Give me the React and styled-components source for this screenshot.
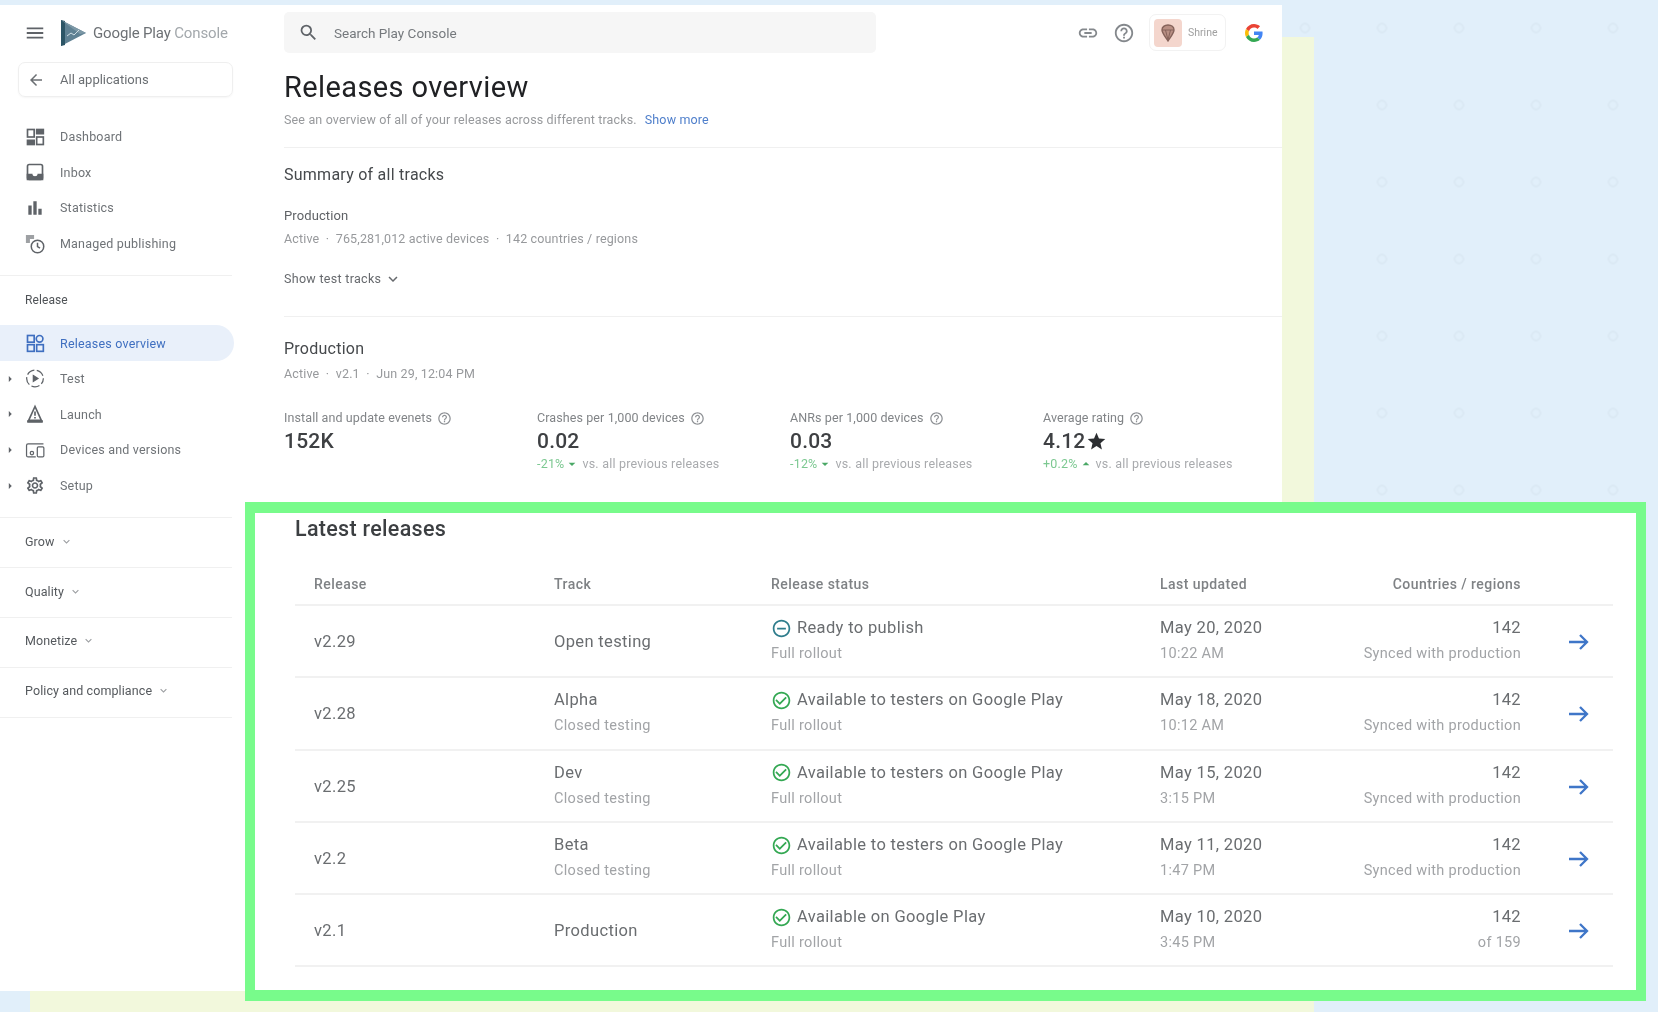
import styled, { createGlobalStyle } from "styled-components";
import {
  MdMenu,
  MdArrowBack,
  MdSearch,
  MdHelpOutline,
  MdLink,
  MdExpandMore,
  MdCheckCircleOutline,
  MdRemoveCircleOutline,
  MdStar,
  MdOutlineSettings,
  MdArrowRight,
  MdArrowDropDown,
  MdArrowDropUp,
  MdBarChart,
} from "react-icons/md";

const GlobalStyle = createGlobalStyle`
  html, body {
    margin: 0;
    padding: 0;
    overflow: hidden;
    background: #e1effa;
    font-family: Roboto, "Liberation Sans", sans-serif;
  }
`;

const Stage = styled.div`
  width: 1658px;
  height: 1012px;
  overflow: hidden;
  padding-top: 5px;
  box-sizing: border-box;
  filter: blur(0.6px);
  background-color: #e1effa;
  background-image: linear-gradient(#f2f8dc, #f2f8dc),
    radial-gradient(circle, transparent 3px, #dbe9f4 3.5px, #dbe9f4 5px, transparent 5.5px);
  background-size: 1284px 975px, 77px 77px;
  background-position: 30px 37px, 1266.5px -10.5px;
  background-repeat: no-repeat, repeat;
`;

const Panel = styled.div`
  width: 1282px;
  height: 986px;
  background: #fff;
  display: flex;
`;

const Sidebar = styled.aside`
  width: 245px;
  flex: none;
  padding-top: 8px;
  box-sizing: border-box;
`;

const Brand = styled.div`
  height: 40px;
  display: flex;
  align-items: center;
  gap: 15px;
  padding-left: 24px;
  color: #5f6368;
`;

const BrandMark = styled.span`
  display: flex;
  align-items: center;
  gap: 7px;
`;

const BrandName = styled.span`
  font-size: 15px;
  letter-spacing: -0.15px;
  color: #6d7175;
  white-space: nowrap;

  em {
    font-style: normal;
    color: #a3a8ac;
  }
`;

const BackBox = styled.div`
  width: 215px;
  height: 35px;
  margin: 9px 0 0 18px;
  box-sizing: border-box;
  border: 1px solid #efefef;
  border-radius: 7px;
  box-shadow: 0 1px 2px rgba(0, 0, 0, 0.04);
  display: flex;
  align-items: center;
  padding-left: 8px;
  gap: 15px;
  font-size: 13px;
  color: #6b6f73;
`;

const NavList = styled.nav`
  margin-top: ${(p) => p.$top || 0}px;
  display: flex;
  flex-direction: column;
`;

const NavRow = styled.div`
  width: 234px;
  height: 35.6px;
  flex: none;
  display: flex;
  align-items: center;
  font-size: 12.5px;
  letter-spacing: 0.2px;
  color: ${(p) => (p.$active ? "#3f6fc0" : "#6f7377")};
  background: ${(p) => (p.$active ? "#e9f0fa" : "transparent")};
  border-radius: 0 18px 18px 0;
`;

const CaretSlot = styled.span`
  width: 25px;
  flex: none;
  display: flex;
  padding-left: 3px;
  box-sizing: border-box;
  color: #5f6368;
`;

const IconSlot = styled.span`
  width: 20px;
  height: 20px;
  flex: none;
  margin-right: 15px;
  display: flex;
  align-items: center;
  justify-content: center;
  color: ${(p) => (p.$active ? "#3f6fc0" : "#5f6368")};
`;

const SideDivider = styled.div`
  width: 232px;
  height: 1px;
  background: #f0f0f0;
  margin-top: ${(p) => p.$top || 0}px;
`;

const SectionLabel = styled.div`
  margin: 15px 0 16px 25px;
  font-size: 12px;
  line-height: 18px;
  letter-spacing: 0.1px;
  color: #4f5357;
`;

const Collapsible = styled.div`
  width: 232px;
  height: 49.8px;
  box-sizing: border-box;
  border-bottom: 1px solid #f0f0f0;
  padding: 0 0 3px 25px;
  display: flex;
  align-items: center;
  gap: 5px;
  font-size: 12.5px;
  letter-spacing: 0.1px;
  color: #55595d;
`;

const Main = styled.main`
  flex: 1;
  min-width: 0;
`;

const Upper = styled.section`
  height: 497px;
  padding-left: 39px;
  box-sizing: border-box;
`;

const TopBar = styled.header`
  padding-top: 7px;
  display: flex;
  align-items: center;
`;

const SearchBox = styled.div`
  width: 592px;
  height: 41px;
  background: #f6f6f6;
  border-radius: 5px;
  display: flex;
  align-items: center;
  gap: 15px;
  padding-left: 14px;
  box-sizing: border-box;
  font-size: 13.5px;
  color: #75797d;
`;

const TopActions = styled.div`
  margin-left: auto;
  padding-right: 19px;
  display: flex;
  align-items: center;
  color: #84888c;
`;

const TopIcon = styled.span`
  width: 36px;
  display: flex;
  justify-content: center;
`;

const ShrineChip = styled.div`
  width: 77px;
  height: 37px;
  margin-left: 7px;
  margin-right: 19px;
  box-sizing: border-box;
  border: 1px solid #f2f2f2;
  border-radius: 7px;
  padding-left: 4px;
  display: flex;
  align-items: center;
  gap: 6px;
  font-size: 10.5px;
  color: #a0a0a0;
`;

const ShrineTile = styled.span`
  width: 28px;
  height: 28px;
  background: #f4d6cd;
  border-radius: 4px;
  display: flex;
  align-items: center;
  justify-content: center;
`;

const Title = styled.h1`
  margin: 16px 0 0;
  font-size: 29px;
  line-height: 36px;
  font-weight: 400;
  letter-spacing: 0.4px;
  color: #202124;
`;

const Muted = styled.p`
  margin: ${(p) => p.$top || 0}px 0 0;
  font-size: 12.5px;
  line-height: 18px;
  letter-spacing: 0.15px;
  color: #97999c;
  white-space: pre;
`;

const LinkText = styled.span`
  color: #4f7fcb;
  margin-left: 8px;
`;

const Rule = styled.hr`
  border: 0;
  height: 1px;
  background: #f0f0f0;
  margin: ${(p) => p.$top}px 0 0;
`;

const Heading = styled.h2`
  margin: ${(p) => p.$top}px 0 0;
  font-size: 16px;
  line-height: 22px;
  font-weight: 400;
  letter-spacing: 0.25px;
  color: #46494c;
`;

const SubLabel = styled.div`
  margin-top: 21px;
  font-size: 13px;
  line-height: 18px;
  letter-spacing: 0.1px;
  color: #5f6266;
`;

const ShowTracks = styled.div`
  margin-top: 22px;
  font-size: 12.5px;
  line-height: 18px;
  letter-spacing: 0.3px;
  color: #66696d;
  display: flex;
  align-items: center;
  gap: 3px;
`;

const Metrics = styled.div`
  margin-top: 26px;
  display: grid;
  grid-template-columns: repeat(4, 253px);
`;

const MetricLabel = styled.div`
  font-size: 12.5px;
  line-height: 18px;
  letter-spacing: 0.1px;
  color: #818487;
  display: flex;
  align-items: center;
  gap: 5px;
`;

const MetricValue = styled.div`
  margin-top: 1px;
  font-size: 21px;
  font-weight: 500;
  line-height: 26px;
  letter-spacing: 0.2px;
  color: #3e4043;
  display: flex;
  align-items: center;
  gap: 1px;
`;

const MetricDelta = styled.div`
  margin-top: 1px;
  height: 18px;
  font-size: 12.5px;
  line-height: 18px;
  letter-spacing: 0.2px;
  color: #a9abae;
  display: flex;
  align-items: center;

  b {
    font-weight: 400;
    color: #7cc891;
  }

  svg {
    color: #4aa866;
    margin-right: 2px;
  }
`;

const Highlight = styled.section`
  width: 1401px;
  height: 499px;
  box-sizing: border-box;
  background: #fff;
  border: 10px solid #78fb8b;
  border-top-width: 11px;
  border-bottom-width: 11px;
  padding: 3px 23px 0 40px;
`;

const CardTitle = styled.h2`
  margin: 0;
  font-size: 21.5px;
  line-height: 26px;
  font-weight: 500;
  letter-spacing: 0.3px;
  color: #3c3f42;
`;

const Table = styled.div`
  margin-top: 24px;
`;

const Row = styled.div`
  display: grid;
  grid-template-columns: 240px 217px 389px 150px 211px 92px;
  padding-left: 19px;
  padding-top: ${(p) => (p.$head ? "0" : "2px")};
  height: ${(p) => (p.$head ? "40px" : "72.3px")};
  box-sizing: border-box;
  border-bottom: 2px solid #f1f1f1;
  align-items: center;
`;

const HeadCell = styled.div`
  padding-bottom: 2px;
  font-size: 14px;
  font-weight: 500;
  letter-spacing: 0.45px;
  color: #7f8285;
  text-align: ${(p) => (p.$right ? "right" : "left")};
`;

const Cell = styled.div`
  text-align: ${(p) => (p.$right ? "right" : "left")};
  white-space: nowrap;
`;

const Primary = styled.div`
  font-size: 16.5px;
  line-height: 22px;
  letter-spacing: 0.35px;
  color: #6a6d70;
  display: flex;
  align-items: center;
  gap: 5px;
  justify-content: ${(p) => (p.$right ? "flex-end" : "flex-start")};
`;

const Secondary = styled.div`
  margin: 6px 0 4px;
  font-size: 14.5px;
  line-height: 18px;
  letter-spacing: 0.3px;
  color: #a2a4a7;
`;

const GoArrow = styled.div`
  padding-left: 48px;
  display: flex;
  color: #3f76c8;
`;

const ForwardArrow = () => (
  <svg width="20" height="18" viewBox="0 0 20 18" fill="none" stroke="currentColor" strokeWidth="2.3">
    <path d="M0 9h18M11 2l7 7-7 7" />
  </svg>
);

const DashboardIcon = () => (
  <svg width="20" height="20" viewBox="0 0 24 24" fill="none" stroke="currentColor" strokeWidth="2">
    <rect x="3" y="3" width="8" height="9" />
    <rect x="14" y="3" width="8" height="5" fill="currentColor" />
    <rect x="3" y="16" width="8" height="5" fill="currentColor" />
    <rect x="14" y="12" width="8" height="9" />
  </svg>
);

const InboxIcon = () => (
  <svg width="20" height="20" viewBox="0 0 24 24" fill="none" stroke="currentColor" strokeWidth="2">
    <rect x="3" y="3" width="18" height="18" rx="2" />
    <path d="M3 15h5c0 2 2 3 4 3s4-1 4-3h5v6H3z" fill="currentColor" />
  </svg>
);

const ManagedIcon = () => (
  <svg width="22" height="22" viewBox="0 0 24 24" fill="none" stroke="currentColor" strokeWidth="1.8">
    <path d="M2 2h8v3H5v5H2z" fill="currentColor" opacity="0.6" />
    <circle cx="15" cy="15" r="7.5" />
    <path d="M15 10.5V15l3 2" />
  </svg>
);

const ReleasesIcon = () => (
  <svg width="20" height="20" viewBox="0 0 24 24" fill="none" stroke="currentColor" strokeWidth="2">
    <rect x="3" y="3" width="8" height="8" />
    <circle cx="17.5" cy="7" r="4" />
    <rect x="3" y="14" width="8" height="8" />
    <rect x="14" y="14" width="8" height="8" />
  </svg>
);

const TestIcon = () => (
  <svg width="21" height="21" viewBox="0 0 24 24" fill="none" stroke="currentColor" strokeWidth="1.5">
    <circle cx="12" cy="12" r="10" strokeDasharray="10 3" strokeDashoffset="3" />
    <path d="M10 8.500l5.500 3.500-5.500 3.500z" fill="currentColor" />
  </svg>
);

const LaunchIcon = () => (
  <svg width="20" height="20" viewBox="0 0 24 24" fill="none" stroke="currentColor" strokeWidth="2">
    <path d="M12 3L4.500 19.500h15z" />
    <path d="M12 9v5M12 15.500v2" />
    <path d="M3 20h18v2H3z" fill="currentColor" strokeWidth="1" />
  </svg>
);

const DevicesIcon = () => (
  <svg width="24" height="22" viewBox="0 0 26 24" fill="none" stroke="currentColor" strokeWidth="1.6">
    <path d="M24 4H4a2 2 0 0 0-2 2v13a2 2 0 0 0 2 2h10" />
    <circle cx="9" cy="16" r="2.200" />
    <rect x="16" y="8" width="8.500" height="13" rx="1.500" />
  </svg>
);

const PlayLogo = () => (
  <svg width="25" height="28" viewBox="0 0 25 28">
    <path d="M0 1l25 13L0 27z" fill="#5f8193" />
    <path d="M0 1l4 1v24l-4 1z" fill="#2c5566" />
    <path d="M0 1l25 13-6 1z" fill="#7d98a6" />
    <path d="M6 17l4-3 3 2 5-5" fill="none" stroke="#cfdde3" strokeWidth="1" />
  </svg>
);

const GemIcon = () => (
  <svg width="14" height="18" viewBox="0 0 14 18" fill="none" stroke="#85625a" strokeWidth="1.4">
    <path d="M7 1c3.500 0 6 2 6 5 0 3-3.500 7-6 11C4.500 13 1 9 1 6c0-3 2.500-5 6-5z" fill="#b98f84" />
    <path d="M1 6h12M4.500 6L7 16l2.500-10" strokeWidth="1" />
  </svg>
);

const GoogleG = () => (
  <svg width="18" height="18" viewBox="0 0 48 48">
    <path fill="#EA4335" d="M24 9.500c3.500 0 6.700 1.200 9.200 3.600l6.900-6.900C35.900 2.400 30.500 0 24 0 14.600 0 6.500 5.400 2.600 13.200l8 6.200C12.400 13.700 17.700 9.500 24 9.500z" />
    <path fill="#4285F4" d="M46.900 24.500c0-1.600-.1-3.100-.4-4.500H24v9h12.900c-.6 3-2.200 5.500-4.700 7.200l7.700 6c4.400-4.100 7-10.200 7-17.700z" />
    <path fill="#FBBC05" d="M10.500 28.600c-.5-1.400-.8-3-.8-4.600s.3-3.200.8-4.600l-8-6.200C.9 16.500 0 20.100 0 24s.9 7.500 2.600 10.800l7.900-6.200z" />
    <path fill="#34A853" d="M24 48c6.500 0 11.900-2.100 15.900-5.800l-7.700-6c-2.200 1.500-5 2.300-8.200 2.300-6.300 0-11.600-4.200-13.500-10l-7.900 6.200C6.500 42.600 14.600 48 24 48z" />
  </svg>
);

const overviewNav = [
  { label: "Dashboard", icon: <DashboardIcon /> },
  { label: "Inbox", icon: <InboxIcon /> },
  { label: "Statistics", icon: <MdBarChart size={22} /> },
  { label: "Managed publishing", icon: <ManagedIcon /> },
];

const releaseNav = [
  { label: "Test", icon: <TestIcon /> },
  { label: "Launch", icon: <LaunchIcon /> },
  { label: "Devices and versions", icon: <DevicesIcon /> },
  { label: "Setup", icon: <MdOutlineSettings size={23} /> },
];

const groups = ["Grow", "Quality", "Monetize", "Policy and compliance"];

const metrics = [
  { label: "Install and update evenets", value: "152K" },
  { label: "Crashes per 1,000 devices", value: "0.02", delta: "-21%", down: true },
  { label: "ANRs per 1,000 devices", value: "0.03", delta: "-12%", down: true },
  { label: "Average rating", value: "4.12", delta: "+0.2%", star: true },
];

const SYNCED = "Synced with production";
const TESTERS = "Available to testers on Google Play";

const releases = [
  { version: "v2.29", track: "Open testing", ready: true, status: "Ready to publish", date: "May 20, 2020", time: "10:22 AM", note: SYNCED },
  { version: "v2.28", track: "Alpha", sub: "Closed testing", status: TESTERS, date: "May 18, 2020", time: "10:12 AM", note: SYNCED },
  { version: "v2.25", track: "Dev", sub: "Closed testing", status: TESTERS, date: "May 15, 2020", time: "3:15 PM", note: SYNCED },
  { version: "v2.2", track: "Beta", sub: "Closed testing", status: TESTERS, date: "May 11, 2020", time: "1:47 PM", note: SYNCED },
  { version: "v2.1", track: "Production", status: "Available on Google Play", date: "May 10, 2020", time: "3:45 PM", note: "of 159" },
];

const App = () => {
  return (
    <Stage>
      <GlobalStyle />
      <Panel>
        <Sidebar>
          <Brand>
            <MdMenu size={22} />
            <BrandMark>
              <PlayLogo />
              <BrandName>
                Google Play <em>Console</em>
              </BrandName>
            </BrandMark>
          </Brand>
          <BackBox>
            <MdArrowBack size={18} />
            All applications
          </BackBox>
          <NavList $top={22}>
            {overviewNav.map((item) => (
              <NavRow key={item.label}>
                <CaretSlot />
                <IconSlot>{item.icon}</IconSlot>
                {item.label}
              </NavRow>
            ))}
          </NavList>
          <SideDivider $top={14} />
          <SectionLabel>Release</SectionLabel>
          <NavList>
            <NavRow $active>
              <CaretSlot />
              <IconSlot $active>
                <ReleasesIcon />
              </IconSlot>
              Releases overview
            </NavRow>
            {releaseNav.map((item) => (
              <NavRow key={item.label}>
                <CaretSlot>
                  <MdArrowRight size={14} />
                </CaretSlot>
                <IconSlot>{item.icon}</IconSlot>
                {item.label}
              </NavRow>
            ))}
          </NavList>
          <SideDivider $top={14} />
          {groups.map((group) => (
            <Collapsible key={group}>
              {group}
              <MdExpandMore size={13} color="#9a9da0" />
            </Collapsible>
          ))}
        </Sidebar>
        <Main>
          <Upper>
            <TopBar>
              <SearchBox>
                <MdSearch size={21} color="#5f6368" />
                Search Play Console
              </SearchBox>
              <TopActions>
                <TopIcon>
                  <MdLink size={22} />
                </TopIcon>
                <TopIcon>
                  <MdHelpOutline size={22} />
                </TopIcon>
                <ShrineChip>
                  <ShrineTile>
                    <GemIcon />
                  </ShrineTile>
                  Shrine
                </ShrineChip>
                <GoogleG />
              </TopActions>
            </TopBar>
            <Title>Releases overview</Title>
            <Muted $top={6}>
              See an overview of all of your releases across different tracks.
              <LinkText>Show more</LinkText>
            </Muted>
            <Rule $top={18} />
            <Heading $top={16}>Summary of all tracks</Heading>
            <SubLabel>Production</SubLabel>
            <Muted $top={5}>{"Active  ·  765,281,012 active devices  ·  142 countries / regions"}</Muted>
            <ShowTracks>
              Show test tracks
              <MdExpandMore size={18} />
            </ShowTracks>
            <Rule $top={28} />
            <Heading $top={21}>Production</Heading>
            <Muted $top={5}>{"Active  ·  v2.1  ·  Jun 29, 12:04 PM"}</Muted>
            <Metrics>
              {metrics.map((metric) => (
                <div key={metric.label}>
                  <MetricLabel>
                    {metric.label}
                    <MdHelpOutline size={15} color="#8e9195" />
                  </MetricLabel>
                  <MetricValue>
                    {metric.value}
                    {metric.star && <MdStar size={21} color="#2c2e31" />}
                  </MetricValue>
                  {metric.delta && (
                    <MetricDelta>
                      <b>{metric.delta}</b>
                      {metric.down ? <MdArrowDropDown size={16} /> : <MdArrowDropUp size={16} />}
                      vs. all previous releases
                    </MetricDelta>
                  )}
                </div>
              ))}
            </Metrics>
          </Upper>
          <Highlight>
            <CardTitle>Latest releases</CardTitle>
            <Table>
              <Row $head>
                <HeadCell>Release</HeadCell>
                <HeadCell>Track</HeadCell>
                <HeadCell>Release status</HeadCell>
                <HeadCell>Last updated</HeadCell>
                <HeadCell $right>Countries / regions</HeadCell>
              </Row>
              {releases.map((release) => (
                <Row key={release.version}>
                  <Cell>
                    <Primary>{release.version}</Primary>
                  </Cell>
                  <Cell>
                    <Primary>{release.track}</Primary>
                    {release.sub && <Secondary>{release.sub}</Secondary>}
                  </Cell>
                  <Cell>
                    <Primary>
                      {release.ready ? (
                        <MdRemoveCircleOutline size={21} color="#2f7d8c" />
                      ) : (
                        <MdCheckCircleOutline size={21} color="#34a853" />
                      )}
                      {release.status}
                    </Primary>
                    <Secondary>Full rollout</Secondary>
                  </Cell>
                  <Cell>
                    <Primary>{release.date}</Primary>
                    <Secondary>{release.time}</Secondary>
                  </Cell>
                  <Cell $right>
                    <Primary $right>142</Primary>
                    <Secondary>{release.note}</Secondary>
                  </Cell>
                  <GoArrow>
                    <ForwardArrow />
                  </GoArrow>
                </Row>
              ))}
            </Table>
          </Highlight>
        </Main>
      </Panel>
    </Stage>
  );
};

export default App;
